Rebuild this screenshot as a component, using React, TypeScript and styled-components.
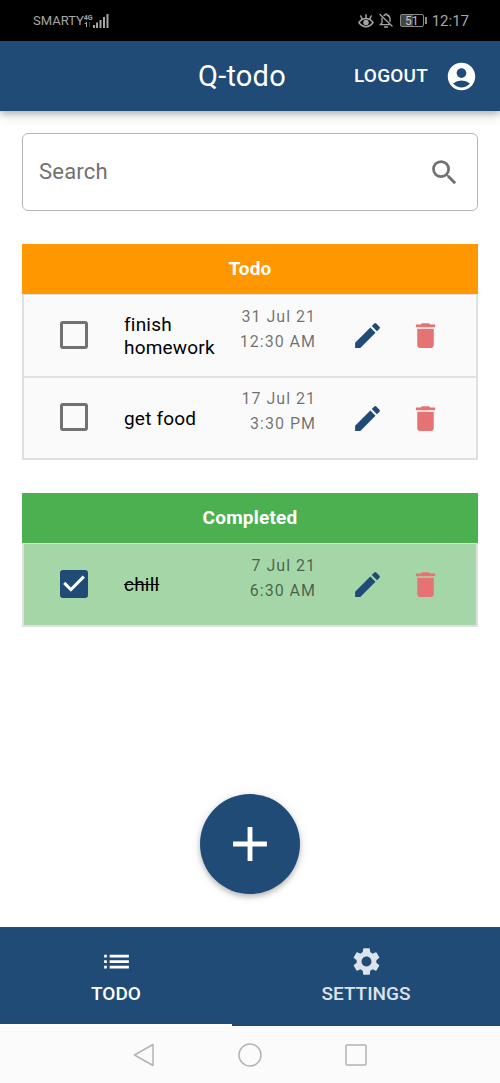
import React, { useState } from "react";
import styled, { createGlobalStyle } from "styled-components";
import {
  MdAccountCircle,
  MdAdd,
  MdCreate,
  MdDelete,
  MdList,
  MdSearch,
  MdSettings,
} from "react-icons/md";

const navy = "#204b77";

const GlobalStyle = createGlobalStyle`
  *, *::before, *::after { box-sizing: border-box; }
  body { margin: 0; background: #fff; font-family: Roboto, "Liberation Sans", sans-serif; }
  button, input { font: inherit; }
  h1, h2, p, ul { margin: 0; padding: 0; }
`;

const Page = styled.div`
  min-height: 100vh;
  display: flex;
  flex-direction: column;
`;

const StatusBar = styled.div`
  display: flex;
  align-items: center;
  justify-content: space-between;
  height: 41px;
  padding: 0 31px 0 33px;
  background: #000;
  color: #a6a6a6;
`;

const StatusGroup = styled.div<{ $gap: number }>`
  display: flex;
  align-items: center;
  gap: ${(p) => p.$gap}px;
`;

const Carrier = styled.span`
  font-size: 13px;
  line-height: 16px;
`;

const NetworkType = styled.span`
  display: flex;
  flex-direction: column;
  font-size: 7px;
  font-weight: 700;
  line-height: 8px;
`;

const Battery = styled.span`
  display: flex;
  align-items: center;
  justify-content: center;
  width: 24px;
  height: 13px;
  border: 1px solid #8a8a8a;
  border-radius: 2px;
  background: linear-gradient(90deg, #444 55%, #000 55%);
  color: #c4c4c4;
  font-size: 12px;
  line-height: 12px;
`;

const BatteryTip = styled.span`
  width: 2px;
  height: 7px;
  margin-left: 1px;
  background: #8a8a8a;
`;

const BatteryWrap = styled.span`
  display: flex;
  align-items: center;
  margin-left: 2px;
`;

const Clock = styled.span`
  font-size: 15px;
  line-height: 20px;
`;

const Header = styled.header`
  display: grid;
  grid-template-columns: 1fr auto 1fr;
  align-items: center;
  height: 70px;
  padding: 0 22px;
  background: ${navy};
  color: #fff;
  box-shadow: 0 3px 6px rgba(0, 0, 0, 0.2), 0 5px 12px rgba(0, 0, 0, 0.12);
`;

const AppTitle = styled.h1`
  grid-column: 2;
  margin-right: 16px;
  font-size: 29px;
  font-weight: 400;
  letter-spacing: 0.0075em;
  line-height: 44px;
`;

const HeaderActions = styled.div`
  display: flex;
  align-items: center;
  justify-content: flex-end;
  gap: 17px;
`;

const PlainButton = styled.button`
  display: inline-flex;
  align-items: center;
  justify-content: center;
  padding: 0;
  border: 0;
  background: none;
  color: inherit;
  cursor: pointer;
`;

const LogoutButton = styled(PlainButton)`
  font-size: 19px;
  font-weight: 500;
  line-height: 34px;
  letter-spacing: 0.01071em;
`;

const Main = styled.main`
  flex: 1;
  display: flex;
  flex-direction: column;
  padding: 22px 22px 33px;
`;

const SearchBox = styled.label`
  display: flex;
  align-items: center;
  height: 78px;
  padding: 0 16px;
  border: 1px solid #b5b5b5;
  border-radius: 6px;
  color: #717171;
`;

const SearchInput = styled.input`
  flex: 1;
  min-width: 0;
  padding: 0;
  border: 0;
  outline: 0;
  background: none;
  color: #000;
  font-size: 22px;
  line-height: 28px;
  letter-spacing: 0.00938em;
  &::placeholder {
    color: #717171;
    opacity: 1;
  }
`;

const ListSection = styled.section`
  margin-top: 33px;
`;

const SectionTitle = styled.h2<{ $color: string }>`
  height: 50px;
  background: ${(p) => p.$color};
  color: #fff;
  font-size: 19px;
  font-weight: 700;
  line-height: 50px;
  text-align: center;
  letter-spacing: 0.01071em;
`;

const Items = styled.ul`
  list-style: none;
`;

const Item = styled.li<{ $done: boolean }>`
  display: grid;
  grid-template-columns: 100px minmax(0, 1fr) 113px 58px 58px;
  align-items: center;
  min-height: 82px;
  padding-right: 22px;
  border: solid #e0e0e0;
  border-width: 1px 2px 0;
  background: ${(p) => (p.$done ? "#a5d6a7" : "#fafafa")};
  &:not(:first-child) {
    border-top-width: 2px;
  }
  &:last-child {
    border-bottom-width: 2px;
    min-height: 84px;
  }
`;

const CheckCell = styled.span`
  display: grid;
  justify-self: center;
  width: 28px;
  height: 28px;
  margin-bottom: 2px;
  > * {
    grid-area: 1 / 1;
  }
  svg {
    pointer-events: none;
  }
`;

const CheckInput = styled.input`
  appearance: none;
  width: 28px;
  height: 28px;
  margin: 0;
  border: 3px solid #717171;
  border-radius: 3px;
  cursor: pointer;
  &:checked {
    border-color: ${navy};
    background: ${navy};
  }
`;

const ItemLabel = styled.label<{ $done: boolean }>`
  color: #000;
  font-size: 19px;
  line-height: 23px;
  letter-spacing: 0.01071em;
  text-decoration: ${(p) => (p.$done ? "line-through" : "none")};
`;

const Due = styled.time`
  display: flex;
  flex-direction: column;
  padding: 0 22px 14px 0;
  color: rgba(0, 0, 0, 0.56);
  font-size: 16px;
  line-height: 25px;
  letter-spacing: 1px;
  text-align: right;
  white-space: nowrap;
`;

const RowButton = styled(PlainButton)<{ $color: string }>`
  height: 34px;
  color: ${(p) => p.$color};
`;

const AddButton = styled(PlainButton)`
  width: 100px;
  height: 100px;
  margin: auto auto 0;
  border-radius: 50%;
  background: ${navy};
  color: #fff;
  box-shadow: 0 3px 5px rgba(0, 0, 0, 0.22), 0 1px 12px rgba(0, 0, 0, 0.1);
`;

const Tabs = styled.nav`
  display: grid;
  grid-template-columns: 232fr 268fr;
  height: 99px;
  background: ${navy};
`;

const Tab = styled(PlainButton)<{ $active: boolean }>`
  flex-direction: column;
  padding-top: 4px;
  border-bottom: 2px solid ${(p) => (p.$active ? "#fff" : navy)};
  color: ${(p) => (p.$active ? "#fff" : "#dbe3ec")};
  font-size: 19px;
  font-weight: 500;
  line-height: 32px;
`;

const SystemBar = styled.div`
  display: flex;
  align-items: center;
  justify-content: center;
  gap: 82px;
  height: 57px;
  background: #fbfbfb;
`;

interface Todo {
  id: number;
  text: string;
  date: string;
  time: string;
  done: boolean;
}

const initialTodos: Todo[] = [
  { id: 1, text: "finish homework", date: "31 Jul 21", time: "12:30 AM", done: false },
  { id: 2, text: "get food", date: "17 Jul 21", time: "3:30 PM", done: false },
  { id: 3, text: "chill", date: "7 Jul 21", time: "6:30 AM", done: true },
];

function SignalIcon() {
  return (
    <svg width="16" height="15" viewBox="0 0 16 15" fill="currentColor" aria-hidden="true">
      <path d="M0 12h2v3H0zM3 9.500h2V15H3zM6.500 7h2v8h-2zM10 4h2v11h-2zM13.500 1h2v14h-2z" />
    </svg>
  );
}

function EyeIcon() {
  return (
    <svg width="16" height="14" viewBox="0 0 16 14" fill="none" stroke="currentColor" strokeWidth="1.500" strokeLinecap="round" aria-hidden="true">
      <path d="M1 8.500C4.500 3 11.500 3 15 8.500 11.500 14 4.500 14 1 8.500Z" />
      <path d="M8 3.500V.8M4 4.500 2.800 2M12 4.500 13.200 2" />
      <circle cx="8" cy="8.500" r="2" fill="currentColor" />
    </svg>
  );
}

function MutedBellIcon() {
  return (
    <svg width="14" height="15" viewBox="0 0 14 15" fill="none" stroke="currentColor" strokeWidth="1.300" strokeLinecap="round" aria-hidden="true">
      <path d="M1 1.500 13 13M5 2.500C5.500 2 6 2 6 2c0-1.400 2-1.400 2 0 2 .5 3 2 3 4v2.500M3 5.500v4.200L1.300 11.700H10" />
      <path d="M5.500 14h3" />
    </svg>
  );
}

interface TodoListProps {
  title: string;
  color: string;
  todos: Todo[];
  onToggle: (id: number) => void;
}

function TodoList({ title, color, todos, onToggle }: TodoListProps) {
  return (
    <ListSection>
      <SectionTitle $color={color}>{title}</SectionTitle>
      <Items>
        {todos.map((todo) => (
          <Item key={todo.id} $done={todo.done}>
            <CheckCell>
              <CheckInput
                type="checkbox"
                id={`todo-${todo.id}`}
                checked={todo.done}
                onChange={() => onToggle(todo.id)}
              />
              {todo.done && (
                <svg width="28" height="28" viewBox="3 3 18 18" fill="#fff" aria-hidden="true">
                  <path d="M10 17l-5-5 1.410-1.410L10 14.170l7.590-7.590L19 8z" />
                </svg>
              )}
            </CheckCell>
            <ItemLabel htmlFor={`todo-${todo.id}`} $done={todo.done}>
              {todo.text}
            </ItemLabel>
            <Due>
              <span>{todo.date}</span>
              <span>{todo.time}</span>
            </Due>
            <RowButton $color={navy} aria-label="Edit">
              <MdCreate size={33} />
            </RowButton>
            <RowButton $color="#e57373" aria-label="Delete">
              <MdDelete size={33} />
            </RowButton>
          </Item>
        ))}
      </Items>
    </ListSection>
  );
}

export default function App() {
  const [todos, setTodos] = useState(initialTodos);
  const [tab, setTab] = useState("todo");
  const toggle = (id: number) =>
    setTodos((all) => all.map((t) => (t.id === id ? { ...t, done: !t.done } : t)));

  return (
    <Page>
      <GlobalStyle />
      <StatusBar>
        <StatusGroup $gap={0}>
          <Carrier>SMARTY</Carrier>
          <NetworkType>
            <span>4G</span>
            <svg width="8" height="5" viewBox="0 0 8 5" fill="currentColor" aria-hidden="true">
              <path d="M0 2 2.500 0H3v5H2V2z" />
              <path d="M5 0h1v5H5z" opacity=".4" />
            </svg>
          </NetworkType>
          <SignalIcon />
        </StatusGroup>
        <StatusGroup $gap={5}>
          <EyeIcon />
          <MutedBellIcon />
          <BatteryWrap>
            <Battery>51</Battery>
            <BatteryTip />
          </BatteryWrap>
          <Clock>12:17</Clock>
        </StatusGroup>
      </StatusBar>
      <Header>
        <AppTitle>Q-todo</AppTitle>
        <HeaderActions>
          <LogoutButton>LOGOUT</LogoutButton>
          <PlainButton aria-label="Account">
            <MdAccountCircle size={33} />
          </PlainButton>
        </HeaderActions>
      </Header>
      <Main>
        <SearchBox>
          <SearchInput type="text" placeholder="Search" aria-label="Search" />
          <MdSearch size={33} />
        </SearchBox>
        <TodoList title="Todo" color="#ff9800" todos={todos.filter((t) => !t.done)} onToggle={toggle} />
        <TodoList title="Completed" color="#4caf50" todos={todos.filter((t) => t.done)} onToggle={toggle} />
        <AddButton aria-label="Add todo">
          <MdAdd size={58} />
        </AddButton>
      </Main>
      <Tabs>
        <Tab $active={tab === "todo"} onClick={() => setTab("todo")}>
          <MdList size={33} />
          TODO
        </Tab>
        <Tab $active={tab === "settings"} onClick={() => setTab("settings")}>
          <MdSettings size={33} />
          SETTINGS
        </Tab>
      </Tabs>
      <SystemBar>
        <svg width="24" height="24" viewBox="0 0 24 24" fill="none" stroke="#b4b4b4" strokeWidth="1.500" strokeLinejoin="round" aria-hidden="true">
          <path d="M21 1.500v21L2.500 12z" />
        </svg>
        <svg width="24" height="24" viewBox="0 0 24 24" fill="none" stroke="#b4b4b4" strokeWidth="1.500" aria-hidden="true">
          <circle cx="12" cy="12" r="11" />
        </svg>
        <svg width="24" height="24" viewBox="0 0 24 24" fill="none" stroke="#b4b4b4" strokeWidth="1.500" aria-hidden="true">
          <rect x="2" y="2" width="20" height="20" rx="1" />
        </svg>
      </SystemBar>
    </Page>
  );
}
